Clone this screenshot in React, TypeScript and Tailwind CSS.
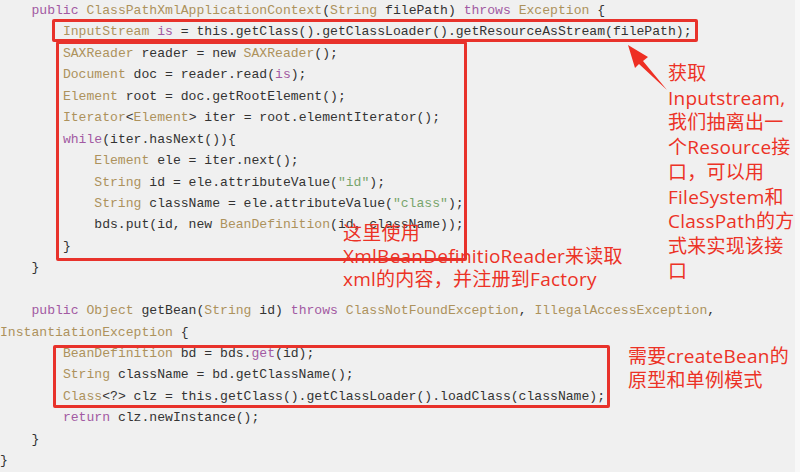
import React from 'react';

const K = ({ children }: { children: React.ReactNode }) => <span className="text-[#a25aa2]">{children}</span>;
const T = ({ children }: { children: React.ReactNode }) => <span className="text-[#ad925c]">{children}</span>;
const S = ({ children }: { children: React.ReactNode }) => <span className="text-[#78a56c]">{children}</span>;

const ind = (n: number) => ' '.repeat(n);

const lines: React.ReactNode[] = [
    <>{ind(4)}<K>public</K> <T>ClassPathXmlApplicationContext</T>(<T>String</T> filePath) <K>throws</K> <T>Exception</T> {'{'}</>,
    <>{ind(8)}<T>InputStream</T> <K>is</K> = this.getClass().getClassLoader().getResourceAsStream(filePath);</>,
    <>{ind(8)}<T>SAXReader</T> reader = new <T>SAXReader</T>();</>,
    <>{ind(8)}<T>Document</T> doc = reader.read(<K>is</K>);</>,
    <>{ind(8)}<T>Element</T> root = doc.getRootElement();</>,
    <>{ind(8)}<T>Iterator</T>&lt;<T>Element</T>&gt; iter = root.elementIterator();</>,
    <>{ind(8)}<K>while</K>(iter.hasNext()){'{'}</>,
    <>{ind(12)}<T>Element</T> ele = iter.next();</>,
    <>{ind(12)}<T>String</T> id = ele.attributeValue(<S>"id"</S>);</>,
    <>{ind(12)}<T>String</T> className = ele.attributeValue(<S>"class"</S>);</>,
    <>{ind(12)}bds.put(id, new <T>BeanDefinition</T>(id, className));</>,
    <>{ind(8)}{'}'}</>,
    <>{ind(4)}{'}'}</>,
    <>{' '}</>,
    <>{ind(4)}<K>public</K> <T>Object</T> getBean(<T>String</T> id) <K>throws</K> <T>ClassNotFoundException</T>, <T>IllegalAccessException</T>,</>,
    <><T>InstantiationException</T> {'{'}</>,
    <>{ind(8)}<T>BeanDefinition</T> bd = bds.<K>get</K>(id);</>,
    <>{ind(8)}<T>String</T> className = bd.getClassName();</>,
    <>{ind(8)}<T>Class</T>&lt;?&gt; clz = this.getClass().getClassLoader().loadClass(className);</>,
    <>{ind(8)}<K>return</K> clz.newInstance();</>,
    <>{ind(4)}{'}'}</>,
    <>{'}'}</>,
];

const note = "absolute font-['Open_Sans','Noto_Sans_CJK_SC',sans-serif] text-[19px] tracking-[0.25px] text-[#ec3226] whitespace-pre";

export default function App() {
    return (
        <div className="relative w-[800px] h-[472px] overflow-hidden bg-[#f0f0f0] flex">
            {/* code listing */}
            <div className="flex-1 font-['Liberation_Mono',monospace] text-[13.1px] leading-[21.45px] text-[#333333]">
                {lines.map((l, i) => (
                    <div key={i} className="whitespace-pre h-[21.45px]">{l}</div>
                ))}
            </div>
            <div className="w-[5px] bg-[#f8f8f8]" />

            {/* red boxes */}
            <div className="absolute left-[52px] top-[19px] w-[646px] h-[23px] border-[3px] border-[#e8322b] rounded-[2px]" />
            <div className="absolute left-[56px] top-[41px] w-[411px] h-[220px] border-[3px] border-[#e8322b] rounded-[2px]" />
            <div className="absolute left-[53px] top-[345px] w-[557px] h-[63px] border-[3px] border-[#e8322b] rounded-[2px]" />

            {/* arrow */}
            <svg className="absolute left-0 top-0 pointer-events-none" width="800" height="472">
                <polygon
                    points="628,45 648,57 643,61 667,90 639,64 635,68"
                    fill="#ee2f23"
                />
            </svg>

            {/* annotations */}
            <div className={`${note} left-[668px] top-[61px] leading-[24.7px]`}>
                {'获取\nInputstream,\n我们抽离出一\n个Resource接\n口，可以用\nFileSystem和\nClassPath的方\n式来实现该接\n口'}
            </div>
            <div className={`${note} left-[343px] top-[222px] leading-[23px]`}>
                {'这里使用\nXmlBeanDefinitioReader来读取\nxml的内容，并注册到Factory'}
            </div>
            <div className={`${note} left-[628px] top-[344px] leading-[24px]`}>
                {'需要createBean的\n原型和单例模式'}
            </div>
        </div>
    );
}
